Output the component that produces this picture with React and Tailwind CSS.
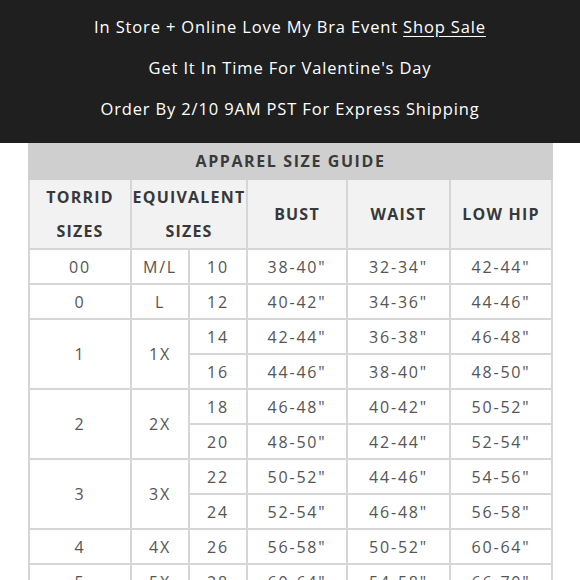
import React from "react";

const rows = [
  { t: "00", e: "M/L", n: "10", b: '38-40"', w: '32-34"', h: '42-44"', span: 1 },
  { t: "0", e: "L", n: "12", b: '40-42"', w: '34-36"', h: '44-46"', span: 1 },
  { t: "1", e: "1X", n: "14", b: '42-44"', w: '36-38"', h: '46-48"', span: 2 },
  { n: "16", b: '44-46"', w: '38-40"', h: '48-50"' },
  { t: "2", e: "2X", n: "18", b: '46-48"', w: '40-42"', h: '50-52"', span: 2 },
  { n: "20", b: '48-50"', w: '42-44"', h: '52-54"' },
  { t: "3", e: "3X", n: "22", b: '50-52"', w: '44-46"', h: '54-56"', span: 2 },
  { n: "24", b: '52-54"', w: '46-48"', h: '56-58"' },
  { t: "4", e: "4X", n: "26", b: '56-58"', w: '50-52"', h: '60-64"', span: 1 },
  { t: "5", e: "5X", n: "28", b: '60-64"', w: '54-58"', h: '66-70"', span: 1 },
];

const td = "border-2 border-[#d6d6d6] text-center align-middle p-0";
const th = "border-2 border-[#d6d6d6] text-center align-middle p-0 font-bold text-[#383838] tracking-[1.2px] text-[16px]";

export default function App() {
  return (
    <div className="w-[580px] min-h-[580px] bg-white" style={{ fontFamily: '"Open Sans", "DejaVu Sans", sans-serif' }}>
      <div className="h-[143px] bg-[#1f1f1f] text-white text-[16.5px] tracking-[0.85px] flex flex-col items-center pt-[15px] gap-[17px] leading-[24px]">
        <div>
          In Store + Online Love My Bra Event <span className="underline underline-offset-[3px]">Shop Sale</span>
        </div>
        <div>Get It In Time For Valentine's Day</div>
        <div>Order By 2/10 9AM PST For Express Shipping</div>
      </div>
      <div className="pl-[28px]">
        <table className="border-collapse table-fixed w-[523px] text-[15px]">
          <colgroup>
            <col className="w-[102px]" />
            <col className="w-[58px]" />
            <col className="w-[58px]" />
            <col className="w-[100px]" />
            <col className="w-[103px]" />
            <col className="w-[102px]" />
          </colgroup>
          <thead>
            <tr className="h-[36px]">
              <th colSpan={6} className="border-2 border-[#cfcfcf] bg-[#cfcfcf] text-center font-bold text-[#3a3a3a] tracking-[1.6px] text-[16px] p-0 border-t-0">
                APPAREL SIZE GUIDE
              </th>
            </tr>
            <tr className="h-[69px] bg-[#f2f2f2]">
              <th className={th + " leading-[34px]"}>
                TORRID<br />SIZES
              </th>
              <th colSpan={2} className={th + " leading-[34px]"}>
                EQUIVALENT<br />SIZES
              </th>
              <th className={th}>BUST</th>
              <th className={th}>WAIST</th>
              <th className={th}>LOW HIP</th>
            </tr>
          </thead>
          <tbody className="text-[#555] tracking-[1.8px] text-[16px]">
            {rows.map((r, i) => (
              <tr key={i} className="h-[35px]">
                {r.span && (
                  <>
                    <td rowSpan={r.span} className={td}>{r.t}</td>
                    <td rowSpan={r.span} className={td}>{r.e}</td>
                  </>
                )}
                <td className={td}>{r.n}</td>
                <td className={td}>{r.b}</td>
                <td className={td}>{r.w}</td>
                <td className={td}>{r.h}</td>
              </tr>
            ))}
          </tbody>
        </table>
      </div>
    </div>
  );
}
